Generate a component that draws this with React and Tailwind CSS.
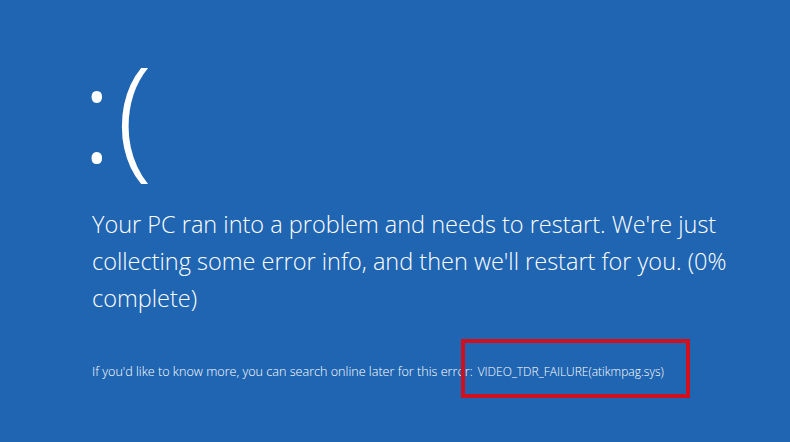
export default function App() {
  return (
    <div className="relative w-[790px] h-[442px] overflow-hidden bg-[#1f65b2] text-white" style={{ fontFamily: '"Open Sans", "Noto Sans", sans-serif' }}>
      <div className="pl-[92px] pt-[32px]">
        {/* sad face */}
        <div className="ml-[-11px] text-[132px] leading-[160px] font-light tracking-[4px]">:(</div>

        {/* main message */}
        <p className="mt-[14px] w-[660px] text-[23.5px] leading-[37px] font-light">
          Your PC ran into a problem and needs to restart. We're just collecting some error info, and then we'll restart for you. (0% complete)
        </p>

        {/* stop code */}
        <div className="mt-[46px] flex items-baseline font-light">
          <span className="text-[12.6px]">If you'd like to know more, you can search online later for this error:</span>
          <span className="ml-[5px] text-[12px]">VIDEO_TDR_FAILURE(atikmpag.sys)</span>
        </div>
      </div>

      {/* annotation box */}
      <div className="absolute left-[461px] top-[339px] w-[229px] h-[59px] border-[4px] border-[#d0101c]" />
    </div>
  );
}
